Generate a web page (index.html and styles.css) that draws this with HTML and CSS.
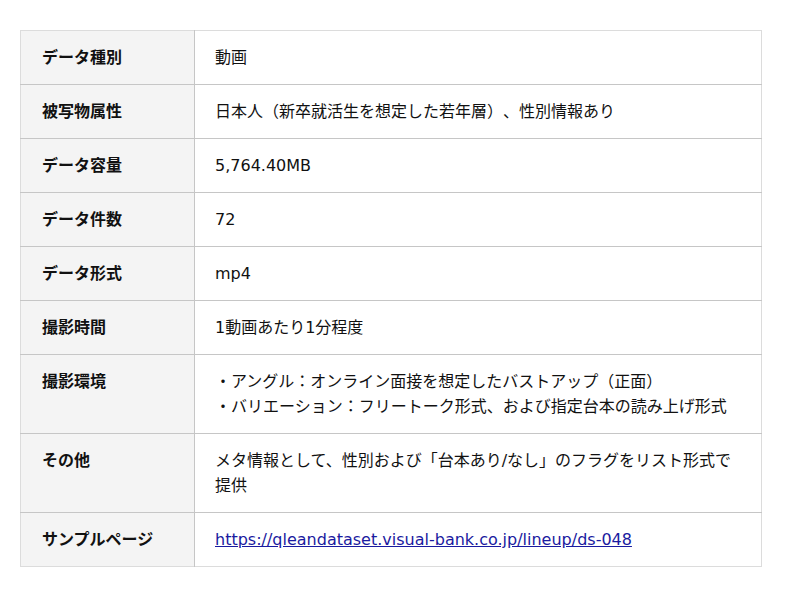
FILE: index.html
```html
<!DOCTYPE html>
<html lang="ja">
<head>
<meta charset="utf-8">
<title>データ概要</title>
<link rel="stylesheet" href="styles.css">
</head>
<body>
<table class="spec">
  <tbody>
    <tr><th>データ種別</th><td>動画</td></tr>
    <tr><th>被写物属性</th><td>日本人（新卒就活生を想定した若年層）、性別情報あり</td></tr>
    <tr><th>データ容量</th><td>5,764.40MB</td></tr>
    <tr><th>データ件数</th><td>72</td></tr>
    <tr><th>データ形式</th><td>mp4</td></tr>
    <tr><th>撮影時間</th><td>1動画あたり1分程度</td></tr>
    <tr><th>撮影環境</th><td>・アングル：オンライン面接を想定したバストアップ（正面）<br>・バリエーション：フリートーク形式、および指定台本の読み上げ形式</td></tr>
    <tr><th>その他</th><td>メタ情報として、性別および「台本あり/なし」のフラグをリスト形式で提供</td></tr>
    <tr><th>サンプルページ</th><td><a class="link" href="#">https://qleandataset.visual-bank.co.jp/lineup/ds-048</a></td></tr>
  </tbody>
</table>
</body>
</html>
```

FILE: styles.css
```css
html, body {
  margin: 0;
  padding: 0;
  background: #fff;
}
body {
  padding: 30px 20px;
  font-family: "DejaVu Sans", "Noto Sans CJK JP", sans-serif;
  font-size: 16px;
  color: #111;
  text-spacing-trim: space-all;
}
.spec {
  width: 742px;
  border-collapse: collapse;
  border: 1px solid #dcdcdc;
  table-layout: fixed;
}
.spec tr {
  border-bottom: 1px solid #c6c6c6;
}
.spec tr:last-child {
  border-bottom: 1px solid #dcdcdc;
}
.spec th, .spec td {
  padding: 14px 20px 14px 21px;
  line-height: 25px;
  vertical-align: top;
  text-align: left;
}
.spec th {
  width: 174px;
  box-sizing: border-box;
  background: #f4f4f4;
  font-weight: bold;
  border-right: 1px solid #c6c6c6;
  padding-left: 21px;
}
.spec td {
  padding-left: 20px;
}
.link {
  color: #1a1aa0;
  text-decoration: underline;
}
```
